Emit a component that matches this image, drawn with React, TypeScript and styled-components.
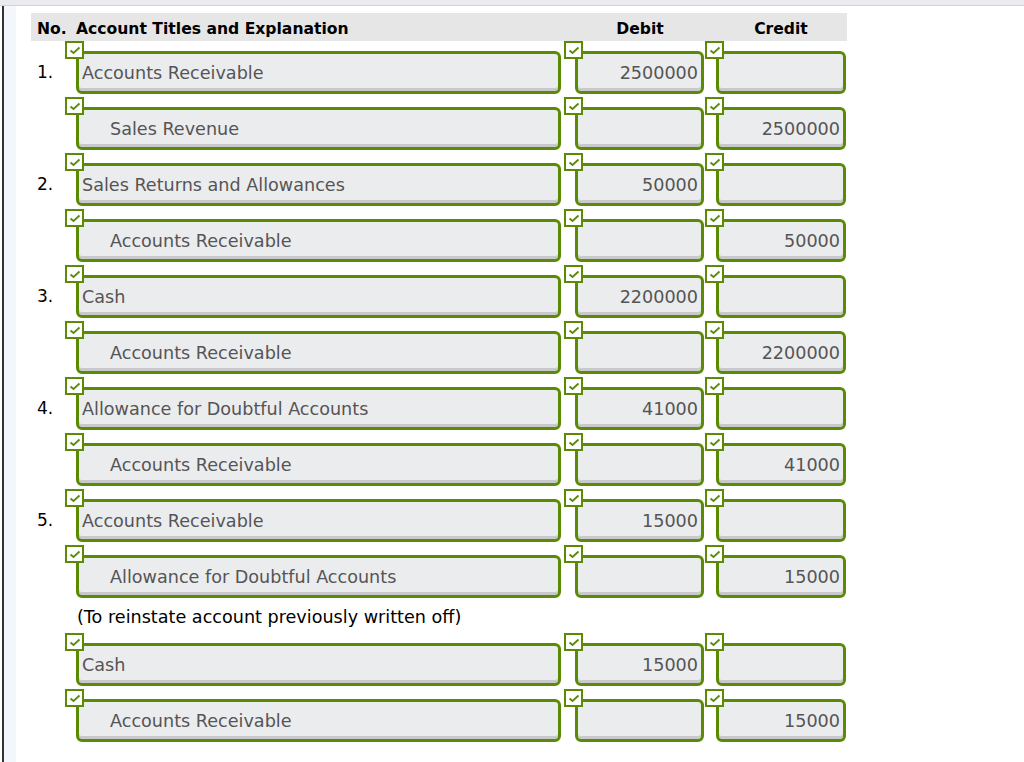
import React, { FC } from 'react'
import styled, { createGlobalStyle } from 'styled-components'

const GlobalStyle = createGlobalStyle`
  html, body {
    margin: 0;
    padding: 0;
    background: #fff;
  }
  body {
    font-family: "DejaVu Sans", Verdana, sans-serif;
  }
`

type Entry = {
  no?: string
  account: string
  indent?: boolean
  debit?: string
  credit?: string
}

type Group = {
  note?: string
  entries: Entry[]
}

const groups: Group[] = [
  {
    entries: [
      { no: '1.', account: 'Accounts Receivable', debit: '2500000' },
      { account: 'Sales Revenue', indent: true, credit: '2500000' },
      { no: '2.', account: 'Sales Returns and Allowances', debit: '50000' },
      { account: 'Accounts Receivable', indent: true, credit: '50000' },
      { no: '3.', account: 'Cash', debit: '2200000' },
      { account: 'Accounts Receivable', indent: true, credit: '2200000' },
      { no: '4.', account: 'Allowance for Doubtful Accounts', debit: '41000' },
      { account: 'Accounts Receivable', indent: true, credit: '41000' },
      { no: '5.', account: 'Accounts Receivable', debit: '15000' },
      { account: 'Allowance for Doubtful Accounts', indent: true, credit: '15000' },
    ],
  },
  {
    note: '(To reinstate account previously written off)',
    entries: [
      { account: 'Cash', debit: '15000' },
      { account: 'Accounts Receivable', indent: true, credit: '15000' },
    ],
  },
]

const CheckMark: FC = () => (
  <CheckBox>
    <svg width="12" height="9" viewBox="0 0 12 9">
      <polyline points="1.5,4.5 4.5,7 10.5,1.5" fill="none" stroke="#5b8a04" strokeWidth="1.8" />
    </svg>
  </CheckBox>
)

type FieldProps = {
  value?: string
  align?: 'left' | 'right'
  indent?: boolean
  trail?: number
}

const Field: FC<FieldProps> = ({ value, align = 'left', indent, trail = 1 }) => (
  <Cell $trail={trail}>
    <CheckMark />
    <InputBox $align={align} $indent={indent}>
      {value}
    </InputBox>
  </Cell>
)

const EntryRow: FC<{ entry: Entry }> = ({ entry }) => (
  <Row>
    <Num>{entry.no}</Num>
    <Field value={entry.account} indent={entry.indent} trail={3} />
    <Field value={entry.debit} align="right" />
    <Field value={entry.credit} align="right" />
  </Row>
)

export default function App() {
  return (
    <>
      <GlobalStyle />
      <TopStrip />
      <Page>
        <Rail />
        <Content>
          <Table>
            <Header>
              <HeadNo>No.</HeadNo>
              <HeadTitle>Account Titles and Explanation</HeadTitle>
              <HeadAmount>Debit</HeadAmount>
              <HeadAmount>Credit</HeadAmount>
            </Header>
            {groups.map((g, gi) => (
              <React.Fragment key={gi}>
                {g.note && <Note>{g.note}</Note>}
                {g.entries.map((e, i) => (
                  <EntryRow key={i} entry={e} />
                ))}
              </React.Fragment>
            ))}
          </Table>
        </Content>
      </Page>
    </>
  )
}

const TopStrip = styled.div`
  height: 5px;
  background: #e9ebef;
  border-bottom: 1px solid #cbd4df;
`

const Page = styled.div`
  display: flex;
  min-height: 756px;
`

const Rail = styled.div`
  width: 12px;
  margin-left: 2px;
  border-left: 2px solid #333;
  background: #f3f7fb;
  flex-shrink: 0;
`

const Content = styled.div`
  padding: 7px 0 0 15px;
`

const Table = styled.div`
  width: 816px;
`

const Header = styled.div`
  display: grid;
  grid-template-columns: 45px 488px 141px 141px;
  height: 28px;
  box-sizing: border-box;
  padding-top: 3px;
  align-items: center;
  background: #e6e6e6;
  font-weight: bold;
  font-size: 15.6px;
  color: #000;
`

const HeadNo = styled.div`
  padding-left: 6px;
`

const HeadTitle = styled.div``

const HeadAmount = styled.div`
  text-align: center;
  padding-left: 11px;
`

const Row = styled.div`
  display: grid;
  grid-template-columns: 34px 499px 141px 142px;
  height: 56px;
`

const Num = styled.div`
  padding: 21px 0 0 6px;
  font-size: 17px;
  color: #000;
`

const Cell = styled.div<{ $trail: number }>`
  position: relative;
  padding: 10px ${(p) => p.$trail}px 0 11px;
`

const CheckBox = styled.div`
  position: absolute;
  left: 0;
  top: 0;
  width: 15px;
  height: 14px;
  border: 2px solid #5b8a04;
  background: #fff;
  display: flex;
  align-items: center;
  justify-content: center;
  z-index: 1;
`

const InputBox = styled.div<{ $align: 'left' | 'right'; $indent?: boolean }>`
  height: 43px;
  box-sizing: border-box;
  border: 3px solid #5b8a04;
  border-radius: 6px;
  background: #ebecee;
  box-shadow: inset 0 -3px 0 #c9c9cb;
  display: flex;
  align-items: center;
  justify-content: ${(p) => (p.$align === 'right' ? 'flex-end' : 'flex-start')};
  padding: 0 ${(p) => (p.$align === 'right' ? '3px' : '0')} 0 ${(p) => (p.$indent ? '31px' : '3px')};
  font-size: 17.6px;
  color: #555;
  white-space: nowrap;
`

const Note = styled.div`
  height: 32px;
  box-sizing: border-box;
  padding: 6px 0 0 46px;
  font-size: 17.6px;
  color: #000;
`
